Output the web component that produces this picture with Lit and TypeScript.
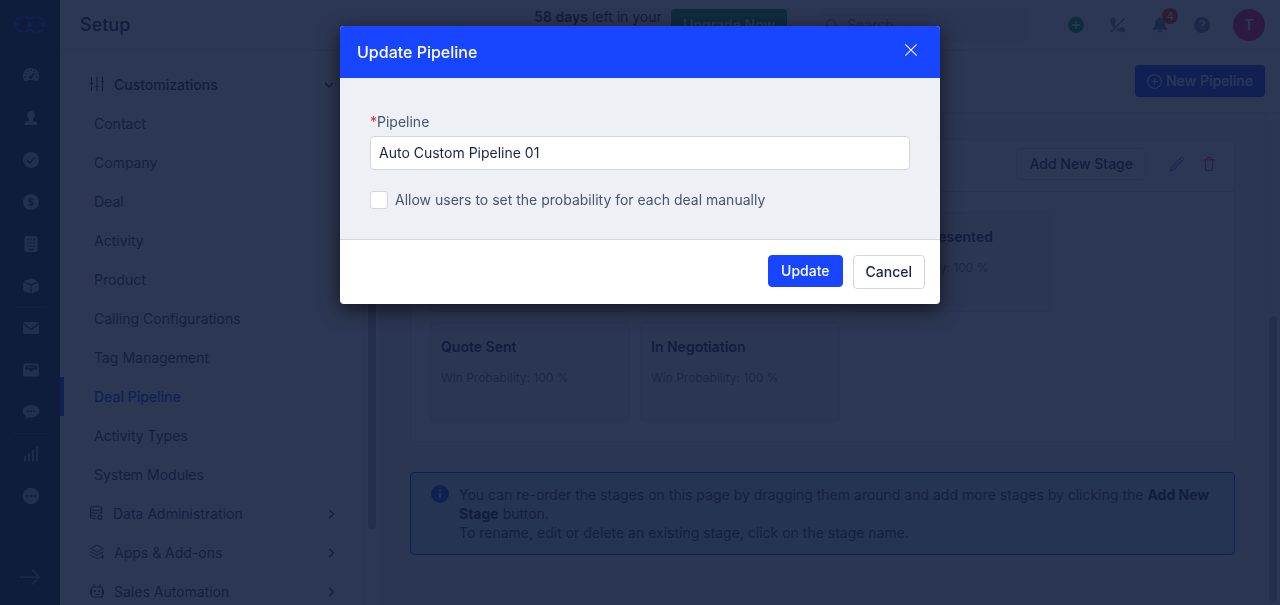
import { LitElement, html, css, svg, nothing, type TemplateResult } from "lit";
import { customElement, property, state } from "lit/decorators.js";
import { classMap } from "lit/directives/class-map.js";

const icons: Record<string, TemplateResult> = {
  gauge: svg`<path fill="currentColor" d="M8 0a8 8 0 0 0-6.300 13c.3.500 1 .6 1.500.3a9 9 0 0 1 9.600 0c.5.300 1.200.2 1.500-.3A8 8 0 0 0 8 0z"/>
    <g stroke="var(--hole)" stroke-width="1.300" fill="none"><path d="M8 1.500v1.500M4.500 2.500l.7 1.300M2 5.400l1.300.7M1.500 9h1.500M14.500 9H13M14 5.400l-1.300.7M11.500 2.500l-.7 1.300"/><path d="M8 9.500l3-4" stroke-width="1.500"/></g><circle cx="7.800" cy="9.300" r="1.700" fill="var(--hole)"/>`,
  person: svg`<path fill="currentColor" d="M8 1C5.700 1 4.200 2.700 4.200 5c0 1.900.8 3.700 1.900 4.600v1.200c0 .5-4.700 1.100-4.700 3.500 0 .4.3.7.7.7h11.800c.4 0 .7-.3.7-.7 0-2.400-4.700-3-4.700-3.500V9.600c1.100-.9 1.900-2.700 1.900-4.600 0-2.300-1.500-4-3.800-4z"/>`,
  check: svg`<circle cx="8" cy="8" r="8" fill="currentColor"/><path d="M4.200 8.300l2.600 2.600 5-5.500" fill="none" stroke="var(--hole)" stroke-width="1.500"/>`,
  dollar: svg`<circle cx="8" cy="8" r="8" fill="currentColor"/><path d="M10 5.900C9.600 5.200 8.900 4.900 8 4.900c-1.200 0-2 .6-2 1.500 0 2.100 4.100 1 4.100 3.200 0 .9-.9 1.500-2.100 1.500-1 0-1.800-.4-2.200-1.100M8 3.400v9.200" fill="none" stroke="var(--hole)" stroke-width="1.300"/>`,
  building: svg`<rect x="1.500" width="13" height="16" rx="2" fill="currentColor"/><g fill="var(--hole)"><path d="M4 3h1.500v1.500H4zM7.200 3h1.500v1.500H7.200zM10.500 3H12v1.500h-1.500zM4 6.200h1.500v1.500H4zM7.200 6.200h1.500v1.500H7.200zM10.500 6.200H12v1.500h-1.500zM4 9.500h1.500V11H4zM7.200 9.500h1.500V11H7.200zM10.500 9.500H12V11h-1.500zM6 13h4v1.200H6z"/></g>`,
  box: svg`<path fill="currentColor" d="M8 .6l7 2.600L8 6.300 1 3.200zM.3 4.300l7.200 3.100v8L.9 12.900a1 1 0 0 1-.6-.9zM15.700 4.300L8.500 7.400v8l6.600-2.500a1 1 0 0 0 .6-.9z"/>`,
  mail: svg`<path fill="currentColor" d="M1.400 2h13.200c.6 0 1 .2 1.200.6L8 8.800.2 2.600C.4 2.200.8 2 1.400 2zM0 4.200l8 6.200 8-6.200v8.400c0 .8-.6 1.400-1.400 1.400H1.400C.6 14 0 13.400 0 12.600z"/>`,
  inbox: svg`<path fill="currentColor" d="M2.200 1.500h11.600c.7 0 1.200.4 1.300 1l.9 5.500v5c0 .8-.6 1.500-1.400 1.500H1.400C.6 14.500 0 13.800 0 13V8l.9-5.500c.1-.6.6-1 1.300-1z"/><path fill="var(--hole)" d="M3 3.300h10l1 4.200h-3.300L8 10 5.300 7.500H2z"/><path fill="currentColor" d="M4.200 4.500h7.600v1H4.200z"/>`,
  chat: svg`<path fill="currentColor" d="M8 1c4.600 0 8.300 2.700 8.300 6.200S12.600 13.400 8 13.400c-.9 0-1.700-.1-2.500-.3L2.800 15.600v-3.900C.9 10.600-.3 9-.3 7.200-.3 3.700 3.400 1 8 1z"/><path fill="var(--hole)" d="M4 6.400h1.700v1.700H4zM7.100 6.400h1.700v1.700H7.100zM10.200 6.400h1.700v1.700h-1.700z"/>`,
  bars: svg`<g stroke="currentColor" stroke-width="1.600" stroke-linecap="round"><path d="M2 10.500V15M6 7.500V15M10 4.500V15M13.900.8V15"/></g>`,
  more: svg`<circle cx="8" cy="8" r="8.300" fill="currentColor"/><g fill="var(--hole)"><circle cx="4" cy="8" r="1.200"/><circle cx="8" cy="8" r="1.200"/><circle cx="12" cy="8" r="1.200"/></g>`,
  sliders: svg`<g fill="none" stroke="currentColor" stroke-width="1"><path d="M1.500 0v14M7 0v14M12.500 0v14M0 6.500h3M5.500 9.500h3M11 4.500h3"/></g>`,
  database: svg`<g fill="none" stroke="currentColor" stroke-width="1.100"><ellipse cx="6.500" cy="2.500" rx="6" ry="2.200"/><path d="M.5 2.500v9c0 1.200 2 2 5.500 2.200M12.500 2.500v6M.5 5.500c0 1.300 2.700 2.300 6 2.300s6-1 6-2.300M.5 8.600c0 1.200 2.400 2.200 6 2.300"/><circle cx="10.500" cy="12" r="2" stroke-width="1.500"/></g>`,
  layers: svg`<g fill="none" stroke="currentColor" stroke-width="1"><path d="M7 0l6.600 3.500L7 7 .4 3.500zM.4 6.700l6.600 3.500 6.600-3.500M.4 10l6.600 3.600 2.500-1.300M12.500 9.800v4M10.500 11.800h4"/></g>`,
  robot: svg`<g fill="none" stroke="currentColor" stroke-width="1.200"><rect x="1.500" y="3" width="11" height="10" rx="2"/><path d="M4 3V.5M10 3V.5M.5 6v4.500M13.500 6v4.500M4.500 10.500h5"/></g><path fill="currentColor" d="M4 6h2v2H4zM8 6h2v2H8z"/>`,
  down: svg`<path d="M4 5.800l4 4.200 4-4.200" fill="none" stroke="currentColor" stroke-width="1.300"/>`,
  right: svg`<path d="M6.300 4l4.200 4-4.200 4" fill="none" stroke="currentColor" stroke-width="1.300"/>`,
  arrow: svg`<path d="M0 8h15M9.500 2L15.500 8l-6 6" fill="none" stroke="currentColor" stroke-width="1"/>`,
  search: svg`<g fill="none" stroke="currentColor" stroke-width="1.200"><circle cx="7" cy="7" r="5"/><path d="M10.700 10.700L15 15"/></g>`,
  plus: svg`<circle cx="8" cy="8" r="8" fill="currentColor"/><path d="M8 4v8M4 8h8" stroke="#fff" stroke-width="1.300"/>`,
  phone: svg`<path fill="currentColor" d="M.7 1.800L3.600.6c.5-.2.900 0 1.100.4l1.300 3c.2.4.1.8-.2 1.100L4.200 6.400c.4.900.900 1.700 1.500 2.500l-2 2.100C1.600 8.600.5 5.700.3 2.500c0-.4.1-.600.4-.7zM9.600 12l1.300-1.600c.3-.3.7-.4 1.100-.3l3 1.300c.4.200.7.700.5 1.100l-.7 2.300c-.1.500-.5.700-1 .7-2.800 0-5.300-.8-7.400-2.400l1.700-1.800c.5.300 1 .6 1.500.7z"/><path d="M1 15.300L14.500 1.500" stroke="currentColor" stroke-width="1.500"/>`,
  bell: svg`<path fill="currentColor" d="M8 0c.6 0 1.100.5 1.100 1.100C11.500 1.600 13 3.500 13 6c0 3 .5 4 1.900 5.300.5.500.1 1.500-.6 1.500H1.700c-.7 0-1.100-1-.6-1.500C2.500 10 3 9 3 6c0-2.500 1.500-4.400 3.900-4.900C6.900.5 7.400 0 8 0zM6 13.800h4a2 2 0 0 1-4 0z"/>`,
  help: svg`<circle cx="8" cy="8" r="8" fill="currentColor"/><path d="M5.700 6.200c0-1.300 1-2.200 2.300-2.200s2.300.8 2.300 2C10.300 7.600 8 7.700 8 9.500M8 10.900v1.400" fill="none" stroke="#fff" stroke-width="1.400"/>`,
  plusRing: svg`<g fill="none" stroke="currentColor" stroke-width="1.100"><circle cx="8" cy="8" r="7.300"/><path d="M8 4.500v7M4.500 8h7"/></g>`,
  pencil: svg`<g fill="none" stroke="currentColor" stroke-width=".9"><path d="M1.300 14.700l1-3.500 9.500-9.400c.6-.6 1.400-.6 2 0l.4.400c.6.6.6 1.400 0 2L4.800 13.700zM10.800 2.800l2.400 2.400M3.700 12.500l7.800-7.800"/></g>`,
  trash: svg`<path d="M2.500 3.800h11M6 3.800V1.500h4v2.300M4 3.800l.7 10.700h6.600L12 3.800" fill="none" stroke="currentColor" stroke-width="1"/>`,
  info: svg`<circle cx="8" cy="8" r="8" fill="currentColor"/><path d="M8 6.800v4.800M8 4v1.500" stroke="#fff" stroke-width="1.400"/>`,
  close: svg`<path d="M1.500 1.500l13 13M14.500 1.500l-13 13" stroke="currentColor" stroke-width="1.200"/>`,
};

const icon = (name: string, size = 16) =>
  html`<svg viewBox="0 0 16 16" width=${size} height=${size} overflow="visible" aria-hidden="true">${icons[name]}</svg>`;

const base = css`
  :host, * { box-sizing: border-box; }
  svg { display: block; flex: none; }
  button, input { font: inherit; }
  button { cursor: pointer; }
  a { color: inherit; text-decoration: none; }
`;

@customElement("icon-rail")
class IconRail extends LitElement {
  static styles = [base, css`
    :host { display: flex; flex-direction: column; align-items: center; width: 60px; flex: none;
      background: #1c2745; color: #b0b8cc; --hole: #1c2745; padding-bottom: 18px; }
    .logo { height: 55px; padding-top: 16px; color: #1b46ff; }
    .group { display: flex; flex-direction: column; padding-left: 2px; }
    .group + .group { border-top: 1px solid #3a4666; }
    .item { display: flex; align-items: center; justify-content: center; width: 32px; height: 42px; }
    .group + .group .item:first-child { height: 41px; padding-bottom: 1px; }
    .expand { margin-top: auto; color: #8d97b2; }
  `];
  render() {
    const groups = [
      ["gauge", "person", "check", "dollar", "building", "box"],
      ["mail", "inbox", "chat"],
      ["bars", "more"],
    ];
    return html`
      <a class="logo" href="#" aria-label="Home">
        <svg viewBox="0 0 32 17" width="32" height="17">
          <path fill="none" stroke="currentColor" stroke-width="2" d="M3 4.500Q4.500 1.500 7 1.500h2M11 1.500h2.500q1.200 1 2.500 1t2.500-1H21M23 1.500h2q2.500 0 4 3M3 12.500q1.500 3 4 3h2M11 15.500h2.500q1.200-2 2.500-2t2.500 2H21M23 15.500h2q2.500 0 4-3"/>
          <g fill="currentColor"><circle cx="2.700" cy="8.500" r="2.700"/><circle cx="16" cy="8.500" r="2.700"/><circle cx="29.300" cy="8.500" r="2.700"/></g>
        </svg>
      </a>
      ${groups.map(g => html`<div class="group">${g.map(n => html`<a class="item" href="#" aria-label=${n}>${icon(n)}</a>`)}</div>`)}
      <a class="expand" href="#" aria-label="Expand">${icon("arrow", 20)}</a>`;
  }
}

@customElement("top-bar")
class TopBar extends LitElement {
  static styles = [base, css`
    :host { display: flex; align-items: center; flex: none; height: 51px; padding: 0 15px 0 20px;
      border-bottom: 1px solid #dfe2ea; background: #fff; }
    h1 { margin: 0 auto 0 0; font-size: 18px; font-weight: 500; }
    .trial { width: 130px; margin-right: 8px; text-align: center; line-height: 19px; padding-top: 2px; }
    .trial b { font-weight: 600; }
    .upgrade { width: 116px; height: 32px; border: 0; border-radius: 4px; background: #12a150; color: #fff; font-weight: 500; margin-right: 30px; }
    .search { display: flex; align-items: center; gap: 8px; width: 209px; height: 34px; padding: 0 8px;
      border-radius: 4px; background: #eff0f5; color: #7b859c; margin-right: 42px; }
    .search input { border: 0; padding: 0; min-width: 0; flex: 1; background: none; color: inherit; }
    .search input::placeholder { color: inherit; opacity: 1; }
    .tools { display: flex; align-items: center; gap: 26px; color: #7b859c; }
    .tool { display: flex; padding: 0; border: 0; background: none; color: inherit; position: relative; }
    .add { color: #12a150; }
    .badge { position: absolute; left: 10px; top: -9px; width: 16px; height: 16px; border-radius: 8px;
      background: #f0281e; color: #fff; font-size: 11px; line-height: 16px; text-align: center; }
    .avatar { width: 32px; height: 32px; margin-left: 23px; border: 0; border-radius: 16px; background: #f01e6e; color: #fff; font-weight: 600; padding: 0; }
  `];
  render() {
    return html`
      <h1>Setup</h1>
      <div class="trial"><b>58 days</b> left in your trial</div>
      <button class="upgrade">Upgrade Now</button>
      <label class="search">${icon("search", 14)}<input type="search" placeholder="Search" aria-label="Search"></label>
      <div class="tools">
        <button class="tool add" aria-label="Add">${icon("plus")}</button>
        <button class="tool" aria-label="Calls">${icon("phone")}</button>
        <button class="tool" aria-label="Notifications">${icon("bell")}<span class="badge">4</span></button>
        <button class="tool" aria-label="Help">${icon("help")}</button>
      </div>
      <button class="avatar" aria-label="Account">T</button>`;
  }
}

interface Entry { label: string; icon?: string; size?: number; open?: boolean; active?: boolean; }

@customElement("setup-nav")
class SetupNav extends LitElement {
  static styles = [base, css`
    :host { display: flex; flex: none; width: 320px; background: #fff; overflow: hidden; }
    nav { flex: 1; padding-top: 14px; }
    .row { display: flex; align-items: center; gap: 8px; height: 39px; padding: 0 25px 0 30px; color: #34425f; border-left: 0 solid #1b46ff; }
    .row.sub { padding-left: 34px; }
    .row.open { font-weight: 500; color: #1a2b50; padding-right: 27px; }
    .row.active { border-left-width: 4px; padding-left: 30px; color: #1b46ff; font-weight: 500; }
    .chev { margin-left: auto; color: #1a2b50; }
    .track { width: 16px; border-left: 1px solid #e8e8ee; border-right: 1px solid #e8e8ee; padding: 49px 3px 0; }
    .thumb { height: 429px; border-radius: 4px; background: #b9bcc6; }
  `];
  private entries: Entry[] = [
    { label: "Customizations", icon: "sliders", open: true },
    { label: "Contact" }, { label: "Company" }, { label: "Deal" }, { label: "Activity" }, { label: "Product" },
    { label: "Calling Configurations" }, { label: "Tag Management" }, { label: "Deal Pipeline", active: true },
    { label: "Activity Types" }, { label: "System Modules" },
    { label: "Data Administration", icon: "database", size: 15 },
    { label: "Apps & Add-ons", icon: "layers" },
    { label: "Sales Automation", icon: "robot" },
  ];
  render() {
    return html`<nav>${this.entries.map(e => html`
      <a href="#" class=${classMap({ row: true, sub: !e.icon, open: !!e.open, active: !!e.active })}>
        ${e.icon ? icon(e.icon, e.size) : nothing}<span>${e.label}</span>
        ${e.icon ? html`<span class="chev">${icon(e.open ? "down" : "right")}</span>` : nothing}
      </a>`)}</nav>
      <div class="track"><div class="thumb"></div></div>`;
  }
}

@customElement("pipeline-page")
class PipelinePage extends LitElement {
  static styles = [base, css`
    :host { display: flex; flex-direction: column; flex: 1; min-width: 0; }
    .bar { display: flex; justify-content: flex-end; align-items: center; flex: none; height: 62px; padding: 0 15px 1px 0;
      background: #fff; border-bottom: 1px solid #dfe2ea; }
    .new { display: flex; align-items: center; gap: 4px; height: 32px; padding: 0 12px; border: 0; border-radius: 4px;
      background: #1b46ff; color: #fff; font-weight: 500; }
    .body { display: flex; flex: 1; min-height: 0; background: #f6f3f8; }
    .content { display: flex; flex-direction: column; gap: 30px; flex: 1; min-width: 0; padding: 26px 30px; overflow: hidden; }
    .card { flex: none; background: #fff; border: 1px solid #dfe2ea; border-radius: 4px; }
    .head { display: flex; align-items: center; justify-content: flex-end; gap: 23px; height: 52px; padding: 0 17px 3px; border-bottom: 1px solid #d3d6e0; }
    .stage-btn { height: 32px; padding: 0 12px; background: #fff; border: 1px solid #d9dde6; border-radius: 4px; color: #1a2b50; font-weight: 500; }
    .act { display: flex; padding: 0; border: 0; background: none; color: #1b46ff; }
    .act + .act { margin-left: -7px; }
    .del { color: #e8303a; }
    .stages { display: flex; flex-wrap: wrap; gap: 10px; padding: 20px 19px 19px; }
    .stage { width: 200px; height: 100px; padding: 15px 10px; background: #f6f5f9; border: 1px solid #dfe2ea; border-radius: 4px; }
    h3 { margin: 0 0 14px; font-size: 14px; line-height: 18px; font-weight: 600; }
    .stage p { margin: 0; font-size: 12px; line-height: 16px; color: #6f7a92; }
    .info { display: flex; gap: 10px; flex: none; padding: 12px 20px; border: 1px solid #1b46ff; border-radius: 4px; background: #cfe0fa; }
    .info svg { color: #1b46ff; }
    .info p { margin: 0; line-height: 19px; color: #34425f; }
    .info b { font-weight: 700; color: #1a2b50; }
    .track { width: 15px; flex: none; border-left: 1px solid #e3e6ee; padding: 203px 3px 0; }
    .thumb { height: 286px; border-radius: 4px; background: #b9bcc6; }
  `];
  render() {
    const stages = ["New", "Qualification", "Proposal Presented", "Quote Sent", "In Negotiation"];
    return html`
      <div class="bar"><button class="new">${icon("plusRing", 15)}New Pipeline</button></div>
      <div class="body">
        <div class="content">
          <section class="card">
            <div class="head">
              <button class="stage-btn">Add New Stage</button>
              <button class="act" aria-label="Edit">${icon("pencil")}</button>
              <button class="act del" aria-label="Delete">${icon("trash")}</button>
            </div>
            <div class="stages">${stages.map(s => html`<article class="stage"><h3>${s}</h3><p>Win Probability: 100 %</p></article>`)}</div>
          </section>
          <section class="info">${icon("info", 18)}
            <p>You can re-order the stages on this page by dragging them around and add more stages by clicking the <b>Add New Stage</b> button.<br>To rename, edit or delete an existing stage, click on the stage name.</p>
          </section>
        </div>
        <div class="track"><div class="thumb"></div></div>
      </div>`;
  }
}

@customElement("update-dialog")
class UpdateDialog extends LitElement {
  static styles = [base, css`
    :host { position: fixed; inset: 0; display: flex; justify-content: center; align-items: flex-start; padding-top: 26px; background: rgba(15, 27, 59, 0.88); }
    .dialog { width: 600px; max-width: 100%; border-radius: 4px; overflow: hidden; background: #fff; box-shadow: 0 5px 20px rgba(0, 0, 0, 0.65); }
    header { display: flex; align-items: center; justify-content: space-between; height: 52px; padding: 0 22px 0 17px; background: #1845ff; color: #fff; }
    h2 { margin: 0; font-size: 16px; font-weight: 500; }
    .close { display: flex; border: 0; padding: 0 0 4px; background: none; color: #fff; }
    .fields { padding: 34px 30px 29px; background: #eff0f5; border-bottom: 1px solid #d3d6e0; color: #47536f; }
    .label { display: block; line-height: 20px; margin-bottom: 4px; }
    .req { color: #e02b1d; }
    .text { display: block; width: 100%; height: 34px; padding: 0 8px 2px; border: 1px solid #d3d6e0; border-radius: 4px; background: #fff; color: #17234d; outline: 0; }
    .option { display: flex; align-items: center; gap: 7px; margin-top: 20px; line-height: 20px; }
    .tick { appearance: none; width: 18px; height: 18px; margin: 0; border: 1px solid #d3d6e0; border-radius: 3px; background: #fff; }
    .tick:checked { background: #1845ff; }
    footer { display: flex; justify-content: flex-end; align-items: flex-start; gap: 10px; padding: 15px; }
    .btn { padding: 0 12px; border: 1px solid #d3d6e0; border-radius: 4px; background: #fff; color: #17234d; height: 34px; font-weight: 500; }
    .primary { height: 32px; background: #1845ff; border-color: #1845ff; color: #fff; }
  `];
  @property() name = "";
  @state() private manual = false;
  render() {
    return html`
      <form class="dialog" role="dialog" aria-labelledby="title" @submit=${(e: Event) => e.preventDefault()}>
        <header><h2 id="title">Update Pipeline</h2><button type="button" class="close" aria-label="Close">${icon("close", 14)}</button></header>
        <div class="fields">
          <label class="label" for="name"><span class="req">*</span>Pipeline</label>
          <input class="text" id="name" type="text" .value=${this.name}>
          <label class="option"><input class="tick" type="checkbox" .checked=${this.manual}
            @change=${(e: Event) => (this.manual = (e.target as HTMLInputElement).checked)}>Allow users to set the probability for each deal manually</label>
        </div>
        <footer><button class="btn primary">Update</button><button type="button" class="btn">Cancel</button></footer>
      </form>`;
  }
}

@customElement("app-root")
class AppRoot extends LitElement {
  static styles = css`
    :host { display: flex; height: 100vh; overflow: hidden; font: 14px/20px Inter, "Liberation Sans", sans-serif; color: #1a2b50; background: #fff; }
    .main { display: flex; flex-direction: column; flex: 1; min-width: 0; }
    .split { display: flex; flex: 1; min-height: 0; }
  `;
  render() {
    return html`
      <icon-rail></icon-rail>
      <div class="main">
        <top-bar></top-bar>
        <div class="split"><setup-nav></setup-nav><pipeline-page></pipeline-page></div>
      </div>
      <update-dialog name="Auto Custom Pipeline 01"></update-dialog>`;
  }
}
